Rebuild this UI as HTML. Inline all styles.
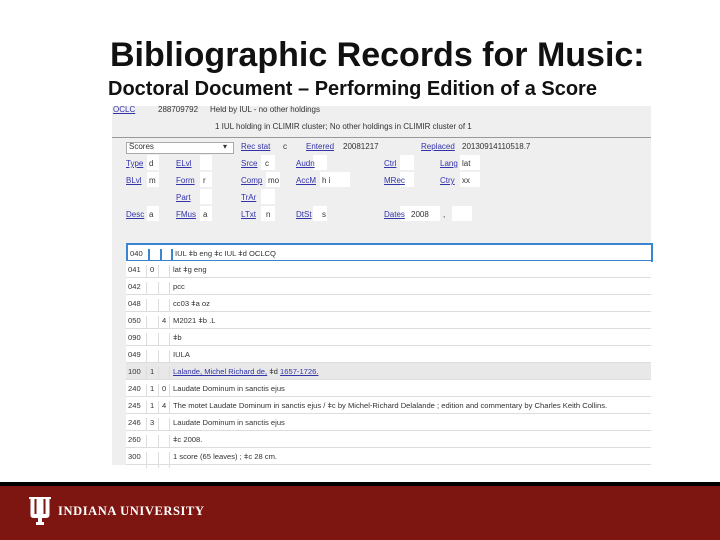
<!DOCTYPE html>
<html><head><style>
body{margin:0;width:720px;height:540px;position:relative;background:#fff;font-family:"Liberation Sans",sans-serif;overflow:hidden}
.a{position:absolute;white-space:nowrap}
.t{font-size:8px;color:#333}
.l{font-size:8px;color:#33a;text-decoration:underline}
.b{position:absolute;background:#fff}
.row{position:absolute;left:126px;width:525px;height:16px;border-bottom:1px solid #ddd;font-size:7.6px;color:#333}
.row span{position:absolute;top:4px}
.c{position:absolute;top:0;height:16px;border-left:1px solid #ddd}
</style></head><body>
<div class="a" style="left:110px;top:36px;font-size:34px;font-weight:bold;color:#111">Bibliographic Records for Music:</div>
<div class="a" style="left:108px;top:78px;font-size:20px;font-weight:bold;color:#111">Doctoral Document – Performing Edition of a Score</div>
<div style="position:absolute;left:112px;top:106px;width:539px;height:359px;background:#efefef"></div>
<div class="a l" style="left:113px;top:105px">OCLC</div>
<div class="a t" style="left:158px;top:105px">288709792</div>
<div class="a t" style="left:210px;top:105px">Held by IUL - no other holdings</div>
<div class="a t" style="left:215px;top:122px">1 IUL holding in CLIMIR cluster; No other holdings in CLIMIR cluster of 1</div>
<div style="position:absolute;left:112px;top:137px;width:539px;height:1px;background:#999"></div>
<div class="b" style="left:126px;top:142px;width:106px;height:10px;border:1px solid #aaa"></div>
<div class="a t" style="left:129px;top:142px">Scores</div>
<div class="a t" style="left:223px;top:142px">▾</div>
<div class="a l" style="left:241px;top:142px">Rec stat</div><div class="a t" style="left:283px;top:142px">c</div>
<div class="a l" style="left:306px;top:142px">Entered</div><div class="a t" style="left:343px;top:142px">20081217</div>
<div class="a l" style="left:421px;top:142px">Replaced</div><div class="a t" style="left:462px;top:142px">20130914110518.7</div>

<div class="b" style="left:147px;top:155px;width:12px;height:15px"></div>
<div class="b" style="left:200px;top:155px;width:12px;height:15px"></div>
<div class="b" style="left:261px;top:155px;width:14px;height:15px"></div>
<div class="b" style="left:313px;top:155px;width:14px;height:15px"></div>
<div class="b" style="left:400px;top:155px;width:14px;height:15px"></div>
<div class="b" style="left:460px;top:155px;width:20px;height:15px"></div>
<div class="a l" style="left:126px;top:159px">Type</div><div class="a t" style="left:149px;top:159px">d</div>
<div class="a l" style="left:176px;top:159px">ELvl</div>
<div class="a l" style="left:241px;top:159px">Srce</div><div class="a t" style="left:265px;top:159px">c</div>
<div class="a l" style="left:296px;top:159px">Audn</div>
<div class="a l" style="left:384px;top:159px">Ctrl</div>
<div class="a l" style="left:440px;top:159px">Lang</div><div class="a t" style="left:462px;top:159px">lat</div>

<div class="b" style="left:147px;top:172px;width:12px;height:15px"></div>
<div class="b" style="left:200px;top:172px;width:12px;height:15px"></div>
<div class="b" style="left:266px;top:172px;width:14px;height:15px"></div>
<div class="b" style="left:320px;top:172px;width:30px;height:15px"></div>
<div class="b" style="left:400px;top:172px;width:14px;height:15px"></div>
<div class="b" style="left:460px;top:172px;width:20px;height:15px"></div>
<div class="a l" style="left:126px;top:176px">BLvl</div><div class="a t" style="left:149px;top:176px">m</div>
<div class="a l" style="left:176px;top:176px">Form</div><div class="a t" style="left:203px;top:176px">r</div>
<div class="a l" style="left:241px;top:176px">Comp</div><div class="a t" style="left:268px;top:176px">mo</div>
<div class="a l" style="left:296px;top:176px">AccM</div><div class="a t" style="left:322px;top:176px">h i</div>
<div class="a l" style="left:384px;top:176px">MRec</div>
<div class="a l" style="left:440px;top:176px">Ctry</div><div class="a t" style="left:462px;top:176px">xx</div>

<div class="b" style="left:200px;top:189px;width:12px;height:15px"></div>
<div class="b" style="left:261px;top:189px;width:14px;height:15px"></div>
<div class="a l" style="left:176px;top:193px">Part</div>
<div class="a l" style="left:241px;top:193px">TrAr</div>

<div class="b" style="left:147px;top:206px;width:12px;height:15px"></div>
<div class="b" style="left:200px;top:206px;width:12px;height:15px"></div>
<div class="b" style="left:261px;top:206px;width:14px;height:15px"></div>
<div class="b" style="left:313px;top:206px;width:14px;height:15px"></div>
<div class="b" style="left:400px;top:206px;width:40px;height:15px"></div>
<div class="b" style="left:452px;top:206px;width:20px;height:15px"></div>
<div class="a l" style="left:126px;top:210px">Desc</div><div class="a t" style="left:149px;top:210px">a</div>
<div class="a l" style="left:176px;top:210px">FMus</div><div class="a t" style="left:203px;top:210px">a</div>
<div class="a l" style="left:241px;top:210px">LTxt</div><div class="a t" style="left:266px;top:210px">n</div>
<div class="a l" style="left:296px;top:210px">DtSt</div><div class="a t" style="left:322px;top:210px">s</div>
<div class="a l" style="left:384px;top:210px">Dates</div><div class="a t" style="left:411px;top:210px">2008</div><div class="a t" style="left:443px;top:210px">,</div>

<div class="row" style="background:#fff;border:2px solid #3a85d0;top:243px;width:523px;height:15px"><span style="left:2px">040</span><span class="c" style="left:20px;border-left:2px solid #3a85d0"></span><span class="c" style="left:32px;border-left:2px solid #3a85d0"></span><span class="c" style="left:43px;border-left:2px solid #3a85d0"></span><span style="left:47px">IUL ǂb eng ǂc IUL ǂd OCLCQ</span></div>
<div class="row" style="top:261px;background:#fff"><span style="left:2px">041</span><span class="c" style="left:20px"></span><span style="left:24px">0</span><span class="c" style="left:32px"></span><span class="c" style="left:43px"></span><span style="left:47px">lat ǂg eng</span></div>
<div class="row" style="top:278px;background:#fff"><span style="left:2px">042</span><span class="c" style="left:20px"></span><span class="c" style="left:32px"></span><span class="c" style="left:43px"></span><span style="left:47px">pcc</span></div>
<div class="row" style="top:295px;background:#fff"><span style="left:2px">048</span><span class="c" style="left:20px"></span><span class="c" style="left:32px"></span><span class="c" style="left:43px"></span><span style="left:47px">cc03 ǂa oz</span></div>
<div class="row" style="top:312px;background:#fff"><span style="left:2px">050</span><span class="c" style="left:20px"></span><span class="c" style="left:32px"></span><span style="left:36px">4</span><span class="c" style="left:43px"></span><span style="left:47px">M2021 ǂb .L</span></div>
<div class="row" style="top:329px;background:#fff"><span style="left:2px">090</span><span class="c" style="left:20px"></span><span class="c" style="left:32px"></span><span class="c" style="left:43px"></span><span style="left:47px">ǂb</span></div>
<div class="row" style="top:346px;background:#fff"><span style="left:2px">049</span><span class="c" style="left:20px"></span><span class="c" style="left:32px"></span><span class="c" style="left:43px"></span><span style="left:47px">IULA</span></div>
<div class="row" style="top:363px;background:#e8e8e8"><span style="left:2px">100</span><span class="c" style="left:20px"></span><span style="left:24px">1</span><span class="c" style="left:32px"></span><span class="c" style="left:43px"></span><span style="left:47px"><u style="color:#33a">Lalande, Michel Richard de,</u> ǂd <u style="color:#33a">1657-1726.</u></span></div>
<div class="row" style="top:380px;background:#fff"><span style="left:2px">240</span><span class="c" style="left:20px"></span><span style="left:24px">1</span><span class="c" style="left:32px"></span><span style="left:36px">0</span><span class="c" style="left:43px"></span><span style="left:47px">Laudate Dominum in sanctis ejus</span></div>
<div class="row" style="top:397px;background:#fff"><span style="left:2px">245</span><span class="c" style="left:20px"></span><span style="left:24px">1</span><span class="c" style="left:32px"></span><span style="left:36px">4</span><span class="c" style="left:43px"></span><span style="left:47px">The motet Laudate Dominum in sanctis ejus / ǂc by Michel-Richard Delalande ; edition and commentary by Charles Keith Collins.</span></div>
<div class="row" style="top:414px;background:#fff"><span style="left:2px">246</span><span class="c" style="left:20px"></span><span style="left:24px">3</span><span class="c" style="left:32px"></span><span class="c" style="left:43px"></span><span style="left:47px">Laudate Dominum in sanctis ejus</span></div>
<div class="row" style="top:431px;background:#fff"><span style="left:2px">260</span><span class="c" style="left:20px"></span><span class="c" style="left:32px"></span><span class="c" style="left:43px"></span><span style="left:47px">ǂc 2008.</span></div>
<div class="row" style="top:448px;background:#fff"><span style="left:2px">300</span><span class="c" style="left:20px"></span><span class="c" style="left:32px"></span><span class="c" style="left:43px"></span><span style="left:47px">1 score (65 leaves) ; ǂc 28 cm.</span></div>

<div style="position:absolute;left:0;top:482px;width:720px;height:4px;background:#000"></div>
<div style="position:absolute;left:0;top:486px;width:720px;height:54px;background:#7d1610"></div>
<svg style="position:absolute;left:29px;top:497px" width="22" height="28" viewBox="0 0 22 28"><path fill="#fff" d="M0 0h7v2h-1.5v15h2V2H6V0h10v2h-1.5v15h2V2H16V0h6v2h-1.5v16q0 3-4 3H13v4h2v3H7v-3h2v-4H5q-3.5 0-3.5-3V2H0z"/></svg>
<div class="a" style="left:58px;top:504px;font-family:'Liberation Serif',serif;font-weight:bold;font-size:12.5px;color:#fff;letter-spacing:0.6px">INDIANA UNIVERSITY</div>
</body></html>
